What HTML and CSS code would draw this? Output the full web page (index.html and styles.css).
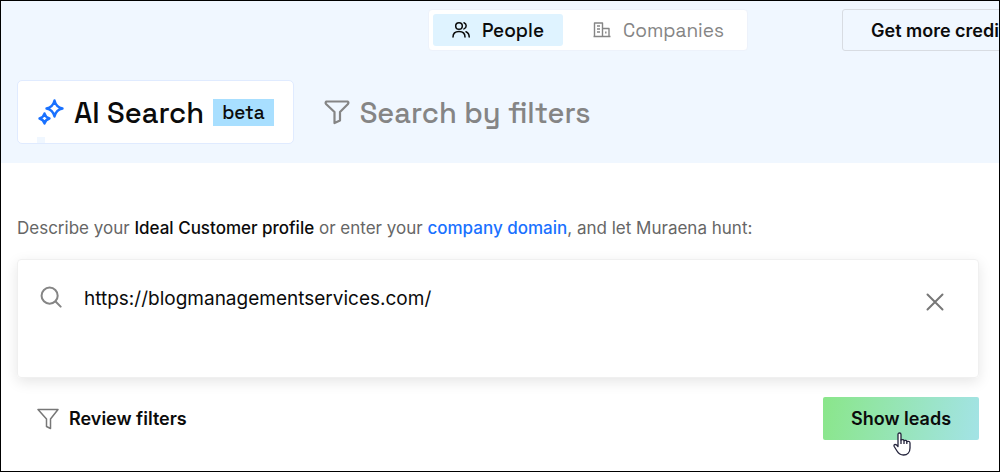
FILE: index.html
```html
<!DOCTYPE html>
<html lang="en">
<head>
    <meta charset="UTF-8">
    <meta name="viewport" content="width=device-width, initial-scale=1.0">
    <title>AI Search - Muraena</title>
    <link rel="stylesheet" href="styles.css">
</head>
<body>
    <header class="header">
        <div class="topbar">
            <nav class="switch">
                <button type="button" class="switch-item active">
                    <svg class="icon-small" viewBox="0 0 18 18" fill="none" stroke="currentColor" stroke-width="1.5" stroke-linecap="round">
                        <circle cx="7" cy="5" r="3.3"/>
                        <path d="M1 16c0-3.600 2.500-5.500 6-5.500s6 1.900 6 5.500M12 1.700a3.300 3.300 0 0 1 0 6.200M14 10.700c2 .8 3.200 2.600 3.200 5.300"/>
                    </svg>
                    People
                </button>
                <button type="button" class="switch-item">
                    <svg class="icon-small" viewBox="0 0 18 18" fill="none" stroke="currentColor" stroke-width="1.4" stroke-linejoin="round">
                        <path d="M1.500 15.500V2h8v13.500M9.500 7.500h6.500v8M.5 15.500h17M4 5h3M4 8h3M4 11h3M12.800 10.500v2"/>
                    </svg>
                    Companies
                </button>
            </nav>
            <button type="button" class="credits">Get more credits</button>
        </div>

        <nav class="tabs">
            <button type="button" class="tab tab-active">
                <svg class="icon-spark" viewBox="0 0 28 28" fill="none" stroke="currentColor" stroke-width="2.4" stroke-linejoin="round">
                    <path d="M17.500 2.500q1.500 6.700 8 8-6.500 1.300-8 8-1.500-6.700-8-8 6.500-1.300 8-8Z"/>
                    <path d="M7.500 15.500q1 4 5 5-4 1-5 5-1-4-5-5 4-1 5-5Z"/>
                </svg>
                AI Search
                <span class="badge">beta</span>
            </button>
            <button type="button" class="tab">
                <svg class="icon-filter" viewBox="0 0 26 26" fill="none" stroke="currentColor" stroke-width="2.200" stroke-linejoin="round">
                    <path d="M2.500 2.500h21q1.500 1 .5 2.500L16 13v8.500L10.500 24V13L2 5Q1 3.500 2.500 2.500Z"/>
                </svg>
                Search by filters
            </button>
        </nav>
    </header>

    <main class="main">
        <label class="prompt" for="query">Describe your <strong>Ideal Customer profile</strong> or enter your <a href="#query">company domain</a>, and let Muraena hunt:</label>

        <div class="search-box">
            <svg class="icon-search" viewBox="0 0 24 24" fill="none" stroke="currentColor" stroke-width="2.200" stroke-linecap="round">
                <circle cx="10.500" cy="10.500" r="8.800"/>
                <path d="M17 17l5.500 5.500"/>
            </svg>
            <textarea id="query" class="query" spellcheck="false">https://blogmanagementservices.com/</textarea>
            <button type="button" class="clear" aria-label="Clear">
                <svg class="icon-close" viewBox="0 0 18 18" fill="none" stroke="currentColor" stroke-width="2" stroke-linecap="round">
                    <path d="M1.500 1.500l15 15M16.500 1.500l-15 15"/>
                </svg>
            </button>
        </div>

        <div class="actions">
            <button type="button" class="review">
                <svg class="icon-review" viewBox="0 0 22 22" fill="none" stroke="currentColor" stroke-width="1.500" stroke-linejoin="round">
                    <path d="M1 1.500h20L13.500 11v9.500l-4-2V11Z"/>
                </svg>
                Review filters
            </button>
            <button type="button" class="show">
                Show leads
                <svg class="cursor" viewBox="0 0 18 24" fill="#fff" stroke="#23233b" stroke-width="1.300" stroke-linejoin="round">
                    <path d="M5 14V2.500Q5 1 6.500 1T8 2.500V8q2.500-1.200 3 .7 2.300-1 2.800.8 3-.8 3.200 1.500v5c0 4-2.500 7-6.500 7-3.500 0-5-1.500-6.500-4L1.200 14.500q-.7-1.800.9-2.200 1.100-.1 2.900 2.200Z"/>
                    <path d="M8 7.500V12M11 8.500V12M13.800 9.500V12" fill="none"/>
                </svg>
            </button>
        </div>
    </main>
</body>
</html>
```

FILE: styles.css
```css
* {
    box-sizing: border-box;
}
body {
    margin: 0;
    min-height: 100vh;
    border: 1px solid #000;
    background: #fff;
    color: #0b0b0b;
    font-family: Inter, sans-serif;
    font-size: 17px;
    overflow: hidden;
}
button {
    display: flex;
    align-items: center;
    padding: 0;
    border: none;
    background: none;
    color: inherit;
    font: inherit;
    white-space: nowrap;
    cursor: pointer;
}
svg {
    flex: none;
}
.header {
    padding: 8px 0 19px 16px;
    background: #f0f7ff;
    overflow: hidden;
}
.topbar {
    display: flex;
    justify-content: flex-end;
    gap: 94px;
    margin-right: -33px;
}
.switch {
    display: flex;
    padding: 4px;
    border: 1px solid #edf2fb;
    border-radius: 4px;
    background: #fff;
    font-family: "Space Grotesk", Inter, sans-serif;
    font-size: 19px;
}
.switch-item {
    height: 32px;
    padding: 0 19px;
    gap: 12px;
    border-radius: 3px;
    color: #858585;
}
.switch-item.active {
    background: #dff3ff;
    color: #0b0b0b;
    font-weight: 500;
}
.switch-item + .switch-item {
    margin-left: 11px;
}
.icon-small {
    width: 18px;
    height: 18px;
}
.credits {
    width: 190px;
    height: 42px;
    padding: 0 28px;
    border: 1px solid #d8dce2;
    border-radius: 3px;
    font-size: 18px;
    font-weight: 600;
}
.tabs {
    display: flex;
    gap: 30px;
    margin-top: 29px;
    font-family: "Space Grotesk", Inter, sans-serif;
    font-size: 29px;
    font-weight: 500;
}
.tab {
    height: 64px;
    gap: 10px;
    color: #858585;
}
.tab-active {
    position: relative;
    gap: 9px;
    padding: 0 19px;
    border: 1px solid #e0ebff;
    border-radius: 5px;
    background: #fff;
    color: #0b0b0b;
}
.tab-active::after {
    content: "";
    position: absolute;
    left: 19px;
    bottom: 0;
    width: 8px;
    height: 6px;
    background: #f0f7ff;
}
.badge {
    padding: 0 9px;
    background: #a8dfff;
    font-size: 19px;
    line-height: 27px;
}
.icon-spark {
    width: 28px;
    height: 28px;
    color: #1971ff;
}
.icon-filter {
    width: 26px;
    height: 26px;
}
.main {
    padding: 52px 20px 30px 16px;
}
.prompt {
    display: block;
    line-height: 26px;
    color: #666;
}
.prompt strong {
    color: #0b0b0b;
    font-weight: 500;
}
.prompt a {
    color: #1971ff;
    font-weight: 500;
    text-decoration: none;
}
.search-box {
    display: flex;
    align-items: flex-start;
    gap: 22px;
    margin-top: 18px;
    padding: 25px 34px 16px 22px;
    border: 1px solid #f0f0f0;
    border-radius: 4px;
    box-shadow: 0 4px 14px rgba(0, 0, 0, 0.1);
}
.icon-search {
    width: 22px;
    height: 24px;
    color: #858585;
}
.query {
    flex: 1;
    min-width: 0;
    height: 76px;
    padding: 0;
    border: none;
    outline: none;
    resize: none;
    background: transparent;
    color: #0b0b0b;
    font: 19px/28px Inter, sans-serif;
}
.clear {
    padding: 8px 0;
    color: #777;
}
.icon-close {
    width: 18px;
    height: 18px;
}
.actions {
    display: flex;
    justify-content: space-between;
    align-items: center;
    margin-top: 19px;
    font-size: 18px;
    font-weight: 600;
}
.review {
    gap: 10px;
    padding-left: 20px;
}
.icon-review {
    width: 22px;
    height: 22px;
    color: #777;
}
.show {
    position: relative;
    justify-content: center;
    width: 156px;
    height: 43px;
    border-radius: 2px;
    background: linear-gradient(100deg, #8ae68a, #a3e3e6);
}
.cursor {
    position: absolute;
    left: 70px;
    top: 35px;
    width: 18px;
    height: 24px;
}
```
